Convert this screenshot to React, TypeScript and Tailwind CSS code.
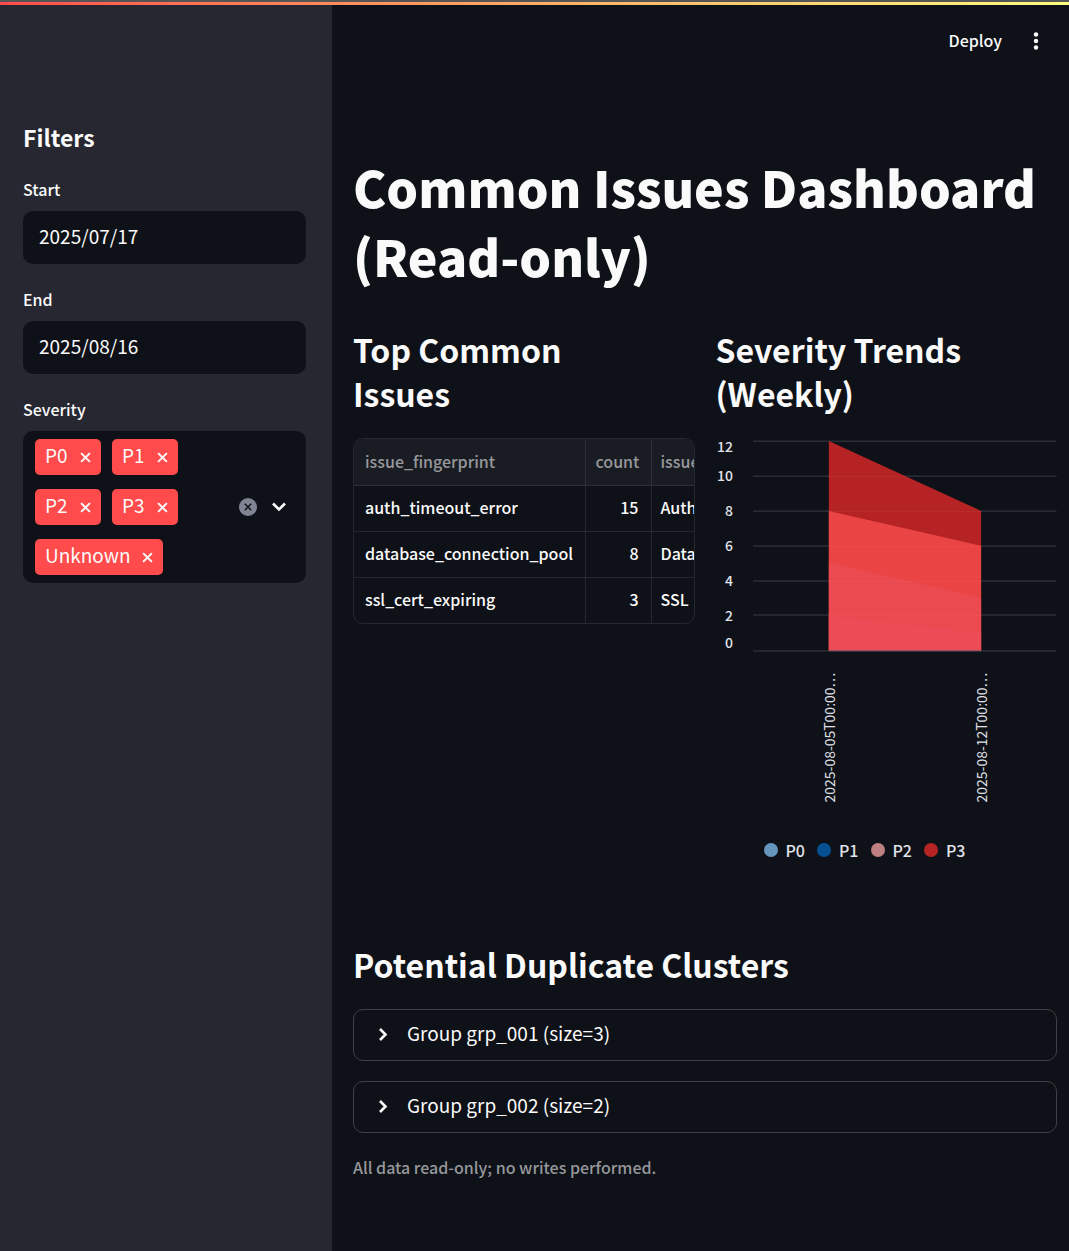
import { useState } from 'react';

const FONT = "font-['Noto_Sans_CJK_SC','Source_Sans_Pro',sans-serif]";

const ISSUES = [
  { fingerprint: 'auth_timeout_error', count: 15, title: 'Auth' },
  { fingerprint: 'database_connection_pool', count: 8, title: 'Data' },
  { fingerprint: 'ssl_cert_expiring', count: 3, title: 'SSL' },
];

const TICKS = [
  { value: 12, line: 3, text: 14 },
  { value: 10, line: 38, text: 43 },
  { value: 8, line: 73, text: 78 },
  { value: 6, line: 108, text: 113 },
  { value: 4, line: 143, text: 148 },
  { value: 2, line: 177, text: 183 },
  { value: 0, line: 213, text: 210 },
];

const LEGEND = [
  { name: 'P0', dot: 'bg-[#6696be]' },
  { name: 'P1', dot: 'bg-[#045093]' },
  { name: 'P2', dot: 'bg-[#bd7f80]' },
  { name: 'P3', dot: 'bg-[#b62425]' },
];

function Cross({ className }: { className: string }) {
  return (
    <svg viewBox="0 0 12 12" className={className} fill="none" stroke="currentColor" strokeWidth="2.2" aria-hidden="true">
      <path d="M1.2 1.2 10.8 10.8M10.8 1.2 1.2 10.8" />
    </svg>
  );
}

function DateField({ id, label, value }: { id: string; label: string; value: string }) {
  return (
    <div>
      <label htmlFor={id} className="block text-base leading-[22px] font-medium">{label}</label>
      <input
        id={id}
        type="text"
        defaultValue={value}
        className="mt-[11px] block h-[53px] w-full rounded-[10px] bg-[#0e1117] px-4 pb-1 text-[19px] leading-7 outline-none"
      />
    </div>
  );
}

function SeveritySelect() {
  const [tags, setTags] = useState(['P0', 'P1', 'P2', 'P3', 'Unknown']);
  return (
    <div role="group" aria-labelledby="severity-label">
      <div id="severity-label" className="text-base leading-[22px] font-medium">Severity</div>
      <div className="mt-[11px] flex min-h-[52px] items-center rounded-[10px] bg-[#0e1117] py-2 pr-5 pl-3">
        <div className="flex flex-1 flex-wrap gap-x-[11px] gap-y-[14px] pr-8">
          {tags.map((tag) => (
            <span key={tag} className="flex h-9 min-w-[66px] items-center justify-between gap-[11px] rounded-[5px] bg-[#ff4b4b] px-2.5 text-[19px] leading-7">
              <span className="pb-1">{tag}</span>
              <button type="button" aria-label={`Remove ${tag}`} onClick={() => setTags(tags.filter((t) => t !== tag))}>
                <Cross className="size-[11px]" />
              </button>
            </span>
          ))}
        </div>
        <button type="button" aria-label="Clear all" onClick={() => setTags([])} className="flex size-[18px] items-center justify-center rounded-full bg-[#808495] text-[#0e1117]">
          <Cross className="size-2" />
        </button>
        <button type="button" aria-label="Open severity options" className="ml-[15px]">
          <svg viewBox="0 0 14 14" className="size-3.5" fill="none" stroke="currentColor" strokeWidth="2.6" aria-hidden="true">
            <path d="M1 3.5 7 9.5 13 3.5" />
          </svg>
        </button>
      </div>
    </div>
  );
}

function IssuesTable() {
  return (
    <div className="overflow-hidden rounded-[10px] border border-[#26282e]">
      <table className="w-full table-fixed border-collapse text-base leading-6 whitespace-nowrap">
        <colgroup>
          <col className="w-[231px]" />
          <col className="w-[66px]" />
          <col />
        </colgroup>
        <thead className="bg-[#1a1c23] text-[#97989c]">
          <tr className="h-[46px] border-b border-[#2d2f36]">
            <th className="border-r border-[#2d2f36] px-[11px] pb-0.5 text-left font-medium">issue_fingerprint</th>
            <th className="border-r border-[#2d2f36] px-2.5 pb-0.5 text-left font-medium">count</th>
            <th className="overflow-hidden pb-0.5 pl-[9px] text-left font-medium">issue</th>
          </tr>
        </thead>
        <tbody className="font-medium">
          {ISSUES.map((row) => (
            <tr key={row.fingerprint} className="h-[46px] border-b border-[#26282e] last:border-b-0">
              <td className="border-r border-[#26282e] px-[11px] pb-0.5">{row.fingerprint}</td>
              <td className="border-r border-[#26282e] px-3 pb-0.5 text-right">{row.count}</td>
              <td className="overflow-hidden pb-0.5 pl-[9px]">{row.title}</td>
            </tr>
          ))}
        </tbody>
      </table>
    </div>
  );
}

function TrendChart() {
  return (
    <figure>
      <svg viewBox="0 0 342 370" className="block w-full" role="img" aria-label="Weekly severity trend">
        {TICKS.map((t) => (
          <g key={t.value}>
            <rect x="37" y={t.line - 0.5} width="304" height="1.5" fill="#2c2e37" />
            <text x="17" y={t.text} textAnchor="end" fill="#e0e2e9" fontSize="14" fontWeight="500">{t.value}</text>
          </g>
        ))}
        <path d="M113 3 265.5 73V213H113Z" fill="#b52324" />
        <path d="M113 73 265.5 108V213H113Z" fill="#ea4444" />
        <path d="M113 125 265.5 160V213H113Z" fill="#ea4a50" />
        <path d="M113 178 265.5 195V213H113Z" fill="#eb4c55" />
        <path d="M113 38.5H190M113 73.5H265M113 108.5H265M113 143.5H265M113 177.5H265" stroke="#ffffff" strokeOpacity="0.05" />
        <path d="M113 213H265" stroke="#8a5068" />
        <text transform="translate(119 365) rotate(-90)" fill="#e0e2e9" fontSize="14">2025-08-05T00:00…</text>
        <text transform="translate(271 365) rotate(-90)" fill="#e0e2e9" fontSize="14">2025-08-12T00:00…</text>
      </svg>
      <figcaption className="mt-[31px] flex gap-3 pl-12 text-base leading-6 font-medium text-[#e0e2e9]">
        {LEGEND.map((item) => (
          <span key={item.name} className="flex items-center gap-2">
            <span className={`size-[14px] rounded-full ${item.dot}`} />
            {item.name}
          </span>
        ))}
      </figcaption>
    </figure>
  );
}

function Expander({ title }: { title: string }) {
  return (
    <details className="rounded-[10px] border border-[#3e4044]">
      <summary className="flex h-[50px] cursor-pointer list-none items-center gap-[17px] px-[22px] text-[19px] leading-7">
        <svg viewBox="0 0 14 14" className="size-3.5" fill="none" stroke="currentColor" strokeWidth="2.6" aria-hidden="true">
          <path d="M4 1 9.5 6.5 4 12" />
        </svg>
        <span className="pb-1">{title}</span>
      </summary>
    </details>
  );
}

export default function App() {
  return (
    <div className={`${FONT} flex min-h-screen flex-col bg-[#0e1117] text-[#fafafa]`}>
      <div className="h-[5px] border-t-2 border-[#555555] bg-linear-to-r from-[#ff4b4b] to-[#fffd80]" />
      <div className="flex flex-1">
        <aside className="w-[332px] shrink-0 bg-[#262730] pt-[116px] pr-[26px] pl-[23px]">
          <h2 className="text-[23px] leading-8 font-bold">Filters</h2>
          <div className="mt-[25px] flex flex-col gap-6">
            <DateField id="start-date" label="Start" value="2025/07/17" />
            <DateField id="end-date" label="End" value="2025/08/16" />
            <SeveritySelect />
          </div>
        </aside>
        <main className="min-w-0 flex-1 pr-3 pb-10 pl-[21px]">
          <header className="flex h-[70px] items-center justify-end gap-[27px] pr-[14px]">
            <button type="button" className="text-base leading-6 font-medium">Deploy</button>
            <button type="button" aria-label="Main menu">
              <svg viewBox="0 0 14 20" className="h-5 w-3.5" fill="currentColor" aria-hidden="true">
                <circle cx="7" cy="4.5" r="2.2" />
                <circle cx="7" cy="11" r="2.2" />
                <circle cx="7" cy="17.5" r="2.2" />
              </svg>
            </button>
          </header>
          <h1 className="mt-[77px] text-[50px] leading-[69px] font-black">Common Issues Dashboard (Read-only)</h1>
          <div className="mt-[37px] grid grid-cols-2 gap-[21px]">
            <section>
              <h2 className="mb-[23px] pr-10 text-[32px] leading-[44px] font-bold">Top Common Issues</h2>
              <IssuesTable />
            </section>
            <section>
              <h2 className="mb-[23px] pr-10 text-[32px] leading-[44px] font-bold">Severity Trends (Weekly)</h2>
              <TrendChart />
            </section>
          </div>
          <h2 className="mt-20 text-[32px] leading-[44px] font-bold">Potential Duplicate Clusters</h2>
          <div className="mt-[23px] flex flex-col gap-5">
            <Expander title="Group grp_001 (size=3)" />
            <Expander title="Group grp_002 (size=2)" />
          </div>
          <p className="mt-[22px] text-base leading-6 font-medium text-[#96979b]">All data read-only; no writes performed.</p>
        </main>
      </div>
    </div>
  );
}
